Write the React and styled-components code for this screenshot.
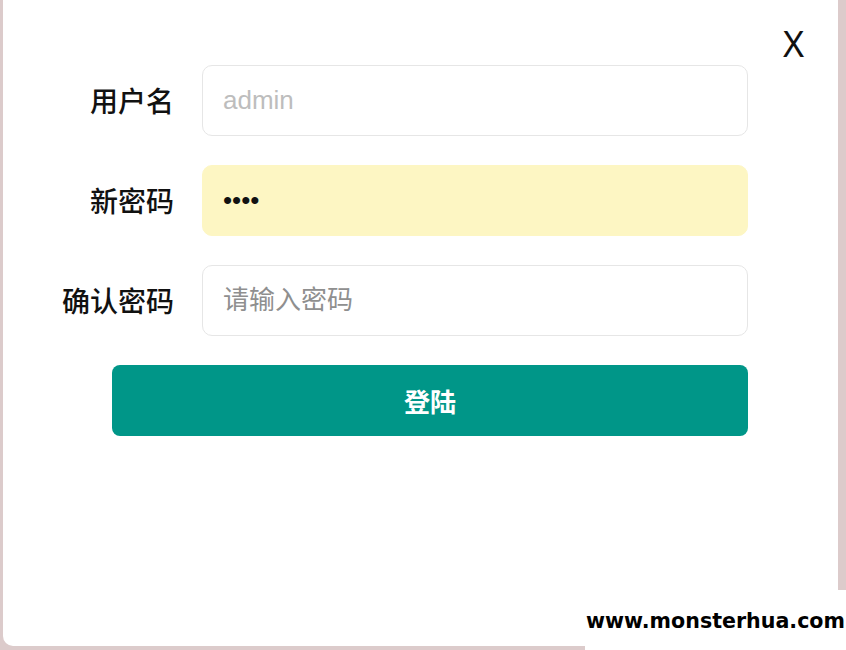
import React from 'react'
import styled, { createGlobalStyle } from 'styled-components'

const GlobalStyle = createGlobalStyle`
  html, body {
    margin: 0;
    padding: 0;
    background: #dccbcb;
    overflow: hidden;
  }
  body {
    font-family: "Noto Sans CJK SC", "Noto Sans", sans-serif;
  }
`

const Card = styled.div`
  position: relative;
  box-sizing: border-box;
  margin-left: 3px;
  width: 835px;
  height: 646px;
  background: #fff;
  border-radius: 0 0 10px 10px;
  padding-top: 65px;
`

const Close = styled.div`
  position: absolute;
  left: 780px;
  top: 22px;
  font-family: "Noto Sans", sans-serif;
  font-size: 36px;
  line-height: 44px;
  color: #111;
  cursor: pointer;
`

const Row = styled.div`
  display: grid;
  grid-template-columns: 171px 546px;
  column-gap: 28px;
  margin-bottom: 29px;
`

const Label = styled.label`
  text-align: right;
  font-size: 28px;
  font-weight: 500;
  line-height: 71px;
  color: #111;
`

const Input = styled.input`
  box-sizing: border-box;
  height: 71px;
  width: 100%;
  padding: 0 20px;
  border: 1px solid ${p => (p.$filled ? '#fdf6c3' : '#e6e6e6')};
  border-radius: 10px;
  background: ${p => (p.$filled ? '#fdf6c3' : '#fff')};
  font-family: "Liberation Sans", "Noto Sans CJK SC", sans-serif;
  font-size: 26px;
  color: #111;
  outline: none;
  &::placeholder {
    color: #8f8f8f;
  }
  &:disabled {
    color: #bdbdbd;
  }
`

const Submit = styled.button`
  display: block;
  margin-left: 109px;
  width: 636px;
  height: 71px;
  border: none;
  border-radius: 8px;
  background: #009688;
  color: #fff;
  font-family: "Noto Sans CJK SC", sans-serif;
  font-size: 26px;
  font-weight: 700;
  cursor: pointer;
`

const Watermark = styled.div`
  position: fixed;
  right: 0;
  bottom: 0;
  width: 261px;
  height: 60px;
  background: #fff;
  display: flex;
  align-items: center;
  justify-content: center;
  font-family: "DejaVu Sans", sans-serif;
  font-weight: 700;
  font-size: 20.6px;
  color: #000;
  padding-top: 2px;
  box-sizing: border-box;
`

const App = () => {
  return (
    <>
      <GlobalStyle />
      <Card>
        <Close>X</Close>
        <Row>
          <Label>用户名</Label>
          <Input value="admin" disabled readOnly />
        </Row>
        <Row>
          <Label>新密码</Label>
          <Input type="password" value="1234" $filled readOnly />
        </Row>
        <Row>
          <Label>确认密码</Label>
          <Input type="password" placeholder="请输入密码" />
        </Row>
        <Submit>登陆</Submit>
      </Card>
      <Watermark>www.monsterhua.com</Watermark>
    </>
  )
}

export default App
